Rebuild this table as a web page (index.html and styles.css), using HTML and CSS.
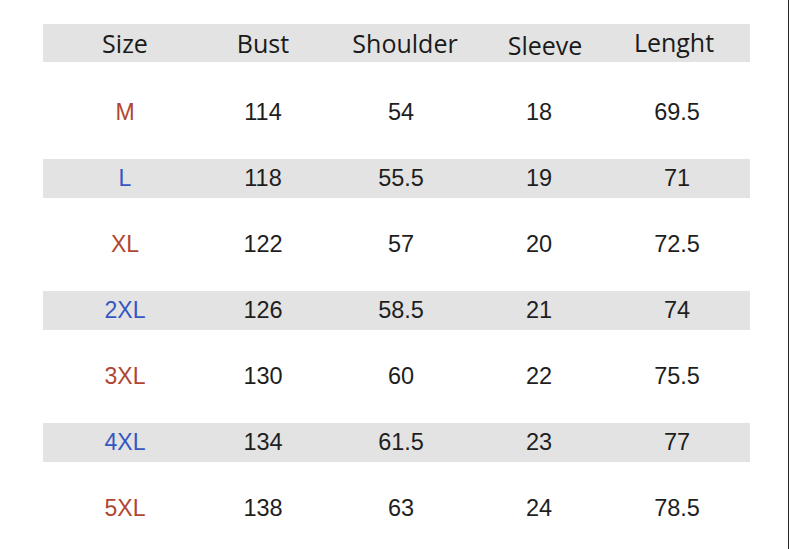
FILE: index.html
```html
<!DOCTYPE html>
<html lang="en">
<head>
<meta charset="utf-8">
<title>Size chart</title>
<link rel="stylesheet" href="styles.css">
</head>
<body>
<div class="page">
  <div class="chart">
    <div class="row head">
      <div class="cell">Size</div>
      <div class="cell">Bust</div>
      <div class="cell shift-r">Shoulder</div>
      <div class="cell shift-r2 low">Sleeve</div>
      <div class="cell shift-l high">Lenght</div>
    </div>
    <div class="body">
      <div class="row">
        <div class="cell size red">M</div><div class="cell">114</div><div class="cell">54</div><div class="cell">18</div><div class="cell">69.5</div>
      </div>
      <div class="row shade">
        <div class="cell size blue">L</div><div class="cell">118</div><div class="cell">55.5</div><div class="cell">19</div><div class="cell">71</div>
      </div>
      <div class="row">
        <div class="cell size red">XL</div><div class="cell">122</div><div class="cell">57</div><div class="cell">20</div><div class="cell">72.5</div>
      </div>
      <div class="row shade">
        <div class="cell size blue">2XL</div><div class="cell">126</div><div class="cell">58.5</div><div class="cell">21</div><div class="cell">74</div>
      </div>
      <div class="row">
        <div class="cell size red">3XL</div><div class="cell">130</div><div class="cell">60</div><div class="cell">22</div><div class="cell">75.5</div>
      </div>
      <div class="row shade">
        <div class="cell size blue">4XL</div><div class="cell">134</div><div class="cell">61.5</div><div class="cell">23</div><div class="cell">77</div>
      </div>
      <div class="row">
        <div class="cell size red">5XL</div><div class="cell">138</div><div class="cell">63</div><div class="cell">24</div><div class="cell">78.5</div>
      </div>
    </div>
  </div>
</div>
</body>
</html>
```
FILE: styles.css
```css
html, body {
  margin: 0;
  padding: 0;
  background: #ffffff;
}
.page {
  width: 789px;
  height: 549px;
  box-sizing: border-box;
  border-right: 1px solid #2a2a2a;
  padding: 24px 0 0 43px;
}
.chart {
  width: 707px;
  display: flex;
  flex-direction: column;
  gap: 31px;
}
.body {
  display: flex;
  flex-direction: column;
  gap: 27px;
}
.row {
  display: grid;
  grid-template-columns: repeat(5, 138px);
  padding-left: 13px;
  height: 39px;
  align-items: center;
  font-family: "Liberation Sans", Arial, sans-serif;
  font-size: 23.5px;
  color: #1e1e1e;
}
.row.head {
  height: 38px;
  background: #e3e3e3;
  font-family: "Open Sans", "Noto Sans", sans-serif;
  font-size: 25px;
  color: #1a1a1a;
}
.row.shade {
  background: #e3e3e3;
}
.cell {
  text-align: center;
  line-height: 1;
}
.size {
  font-size: 23px;
}
.shift-r {
  padding-left: 8px;
}
.shift-r2 {
  padding-left: 12px;
}
.shift-l {
  padding-right: 6px;
}
.low {
  padding-top: 4px;
}
.high {
  padding-bottom: 2px;
}
.red {
  color: #b04632;
}
.blue {
  color: #3557c2;
}
```
